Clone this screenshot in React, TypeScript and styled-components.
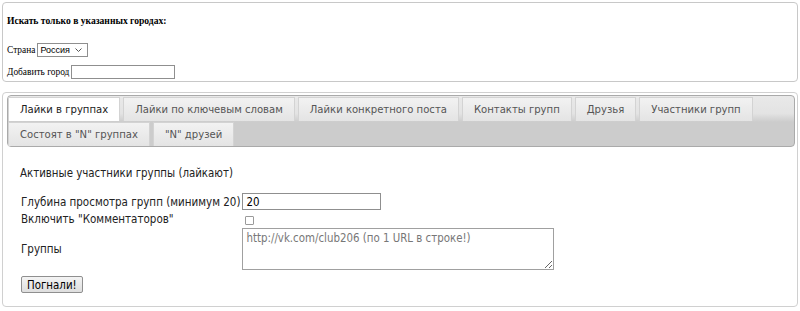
import styled, {createGlobalStyle} from 'styled-components'
import {useState} from 'react'

const GlobalStyle = createGlobalStyle`
    html, body {
        margin: 0;
        padding: 0;
        background: #ffffff;
    }
`

const Page = styled.div`
    padding: 2px;
    width: 796px;
    box-sizing: content-box;
`

const SearchBox = styled.div`
    border: 1px solid #c8c8c8;
    border-radius: 4px;
    padding: 0 4px 1px;
    font-family: 'Liberation Serif', 'Times New Roman', serif;
    font-size: 9.4px;
    color: #000;
    height: 77px;
    box-sizing: content-box;
`

const SearchTitle = styled.div`
    font-weight: 700;
    font-size: 9.6px;
    line-height: 13px;
    margin-top: 11px;
`

const FieldRow = styled.div<{gap: number}>`
    display: flex;
    align-items: center;
    gap: 2px;
    height: 14px;
    margin-top: ${p => p.gap}px;
`

const SelectWrap = styled.span`
    position: relative;
    display: inline-flex;
    svg {
        position: absolute;
        right: 6px;
        top: 5px;
        pointer-events: none;
    }
`

const Select = styled.select`
    appearance: none;
    width: 51px;
    height: 14px;
    border: 1px solid #8f8f8f;
    border-radius: 0;
    background: #fff;
    font-family: 'Liberation Sans', Arial, sans-serif;
    font-size: 9px;
    padding: 0 0 0 2px;
    margin: 0;
    color: #000;
    outline: none;
`

const CityInput = styled.input`
    width: 100px;
    height: 12px;
    border: 1px solid #8f8f8f;
    padding: 0 1px;
    margin: 0;
    font-size: 10px;
    outline: none;
`

const TabsBox = styled.div`
    margin-top: 10px;
    border: 1px solid #d0d0d0;
    border-radius: 4px;
    padding: 2px 2px 0 4px;
    height: 211px;
    box-sizing: content-box;
    font-family: 'DejaVu Sans Condensed', 'DejaVu Sans', Verdana, sans-serif;
    font-size: 11.4px;
`

const TabNav = styled.div`
    display: flex;
    flex-wrap: wrap;
    row-gap: 1px;
    border: 1px solid #aaaaaa;
    border-radius: 4px;
    padding: 1px 1px 0 0;
    height: 49px;
    box-sizing: content-box;
    background: linear-gradient(#e9e9e9 0%, #e3e3e3 35%, #cccccc 52%, #cccccc 100%);
`

const Tab = styled.button<{active?: boolean}>`
    font-family: 'DejaVu Sans Condensed', 'DejaVu Sans', Verdana, sans-serif;
    font-size: 11.2px;
    line-height: 13px;
    height: 24px;
    padding: 5px 11px;
    margin: 0 3px 0 0;
    border: 1px solid #d3d3d3;
    border-bottom: none;
    border-radius: 0;
    cursor: pointer;
    color: ${p => (p.active ? '#212121' : '#555555')};
    background: ${p => (p.active ? '#ffffff' : 'linear-gradient(#f2f2f2, #e4e4e4)')};
`

const Panel = styled.div`
    padding: 20px 13px 0 13px;
    color: #222;
`

const PanelTitle = styled.div`
    line-height: 13px;
    margin-bottom: 11px;
`

const Form = styled.table`
    border-spacing: 2px;
    margin-left: -1px;
    font-size: 11.5px;
    color: #222;
    td {
        padding: 0;
        vertical-align: middle;
    }
`

const NumInput = styled.input`
    width: 131px;
    height: 15px;
    border: 1px solid #8f8f8f;
    padding: 0 3px;
    margin: 0;
    font-family: 'DejaVu Sans Condensed', 'DejaVu Sans', Verdana, sans-serif;
    font-size: 11.4px;
    color: #000;
    outline: none;
`

const Check = styled.input`
    appearance: none;
    width: 9px;
    height: 9px;
    border: 1px solid #9a9a9a;
    border-radius: 1px;
    margin: 3px 0 1px 3px;
    background: #fff;
    display: block;
`

const Area = styled.textarea`
    width: 304px;
    height: 36px;
    border: 1px solid #a0a0a0;
    padding: 2px 3px;
    margin: 0;
    display: block;
    font-family: 'DejaVu Sans Condensed', 'DejaVu Sans', Verdana, sans-serif;
    font-size: 11.4px;
    outline: none;
    &::placeholder {
        color: #777;
    }
`

const Go = styled.button`
    margin-top: 4px;
    margin-left: 1px;
    height: 17px;
    padding: 0 5px;
    font-family: 'DejaVu Sans Condensed', 'DejaVu Sans', Verdana, sans-serif;
    font-size: 11.4px;
    color: #000;
    border: 1px solid #8f8f8f;
    border-radius: 2px;
    background: linear-gradient(#f4f4f4, #dedede);
    cursor: pointer;
`

const tabs = [
    'Лайки в группах',
    'Лайки по ключевым словам',
    'Лайки конкретного поста',
    'Контакты групп',
    'Друзья',
    'Участники групп',
    'Состоят в "N" группах',
    '"N" друзей',
]

export default function App() {
    const [active, setActive] = useState(0)
    return (
        <Page>
            <GlobalStyle />
            <SearchBox>
                <SearchTitle>Искать только в указанных городах:</SearchTitle>
                <FieldRow gap={16}>
                    Страна
                    <SelectWrap>
                        <Select defaultValue="ru">
                            <option value="ru">Россия</option>
                        </Select>
                        <svg width="7" height="4" viewBox="0 0 7 4">
                            <path d="M0.5 0.5 L3.5 3.5 L6.5 0.5" fill="none" stroke="#555" strokeWidth="1" />
                        </svg>
                    </SelectWrap>
                </FieldRow>
                <FieldRow gap={8}>
                    Добавить город
                    <CityInput />
                </FieldRow>
            </SearchBox>
            <TabsBox>
                <TabNav>
                    {tabs.map((t, i) => (
                        <Tab key={t} active={i === active} onClick={() => setActive(i)}>
                            {t}
                        </Tab>
                    ))}
                </TabNav>
                <Panel>
                    <PanelTitle>Активные участники группы (лайкают)</PanelTitle>
                    <Form>
                        <tbody>
                            <tr>
                                <td>Глубина просмотра групп (минимум 20)</td>
                                <td>
                                    <NumInput defaultValue="20" />
                                </td>
                            </tr>
                            <tr>
                                <td>Включить "Комментаторов"</td>
                                <td>
                                    <Check type="checkbox" />
                                </td>
                            </tr>
                            <tr>
                                <td>Группы</td>
                                <td>
                                    <Area placeholder="http://vk.com/club206 (по 1 URL в строке!)" />
                                </td>
                            </tr>
                        </tbody>
                    </Form>
                    <Go>Погнали!</Go>
                </Panel>
            </TabsBox>
        </Page>
    )
}
